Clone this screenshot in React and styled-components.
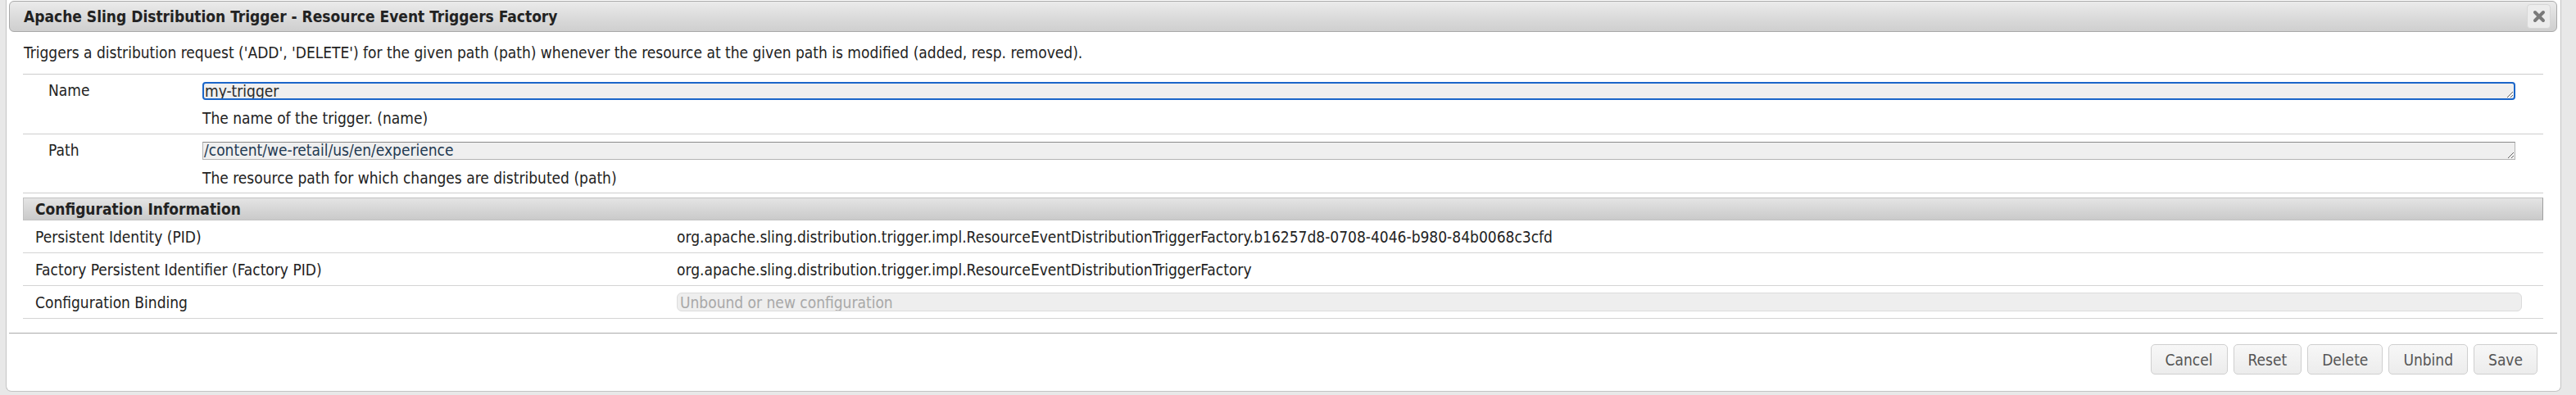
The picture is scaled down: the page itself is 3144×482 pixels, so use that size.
import React from 'react';
import styled, { createGlobalStyle } from 'styled-components';

const GlobalStyle = createGlobalStyle`
  body {
    margin: 0;
    background: #e8e8e8;
    font-family: "DejaVu Sans Condensed", "DejaVu Sans", Verdana, sans-serif;
    font-size: 19px;
    color: #222;
  }
`;

const Page = styled.div`
  padding: 0 18px 0 7px;
`;

const Dialog = styled.div`
  background: #fff;
  border: 1px solid #c4c4c4;
  border-top: none;
  border-radius: 0 0 7px 7px;
  padding: 1px 4px 0 3px;
`;

const TitleBar = styled.div`
  height: 36px;
  display: flex;
  align-items: center;
  justify-content: space-between;
  border: 1px solid #a9a9a9;
  border-radius: 6px;
  background: linear-gradient(180deg, #ebebeb 0%, #d9d9d9 60%, #cfcfcf 100%);
  padding: 0 7px 0 17px;
`;

const Title = styled.span`
  font-weight: bold;
  color: #222;
  line-height: 22px;
`;

const CloseButton = styled.button`
  width: 29px;
  height: 30px;
  border: 1px solid #d6d6d6;
  border-radius: 4px;
  background: #ececec;
  display: flex;
  align-items: center;
  justify-content: center;
  padding: 0;
  cursor: pointer;
`;

const Content = styled.div`
  padding: 0 17px;
`;

const Description = styled.p`
  margin: 0;
  padding: 14px 1px 15px;
  line-height: 22px;
  border-bottom: 1px solid #cdcdcd;
`;

const FieldRow = styled.div`
  display: grid;
  grid-template-columns: 219px 1fr;
  padding: 9px 34px ${p => p.$bottom}px 0;
  border-bottom: 1px solid #cdcdcd;
`;

const FieldLabel = styled.div`
  padding-left: 31px;
  line-height: 20px;
`;

const FieldBody = styled.div`
  display: flex;
  flex-direction: column;
`;

const TextArea = styled.textarea`
  display: block;
  box-sizing: border-box;
  width: 100%;
  height: 22px;
  margin: 0;
  padding: 0 1px;
  font: inherit;
  line-height: 19px;
  color: ${p => (p.$focused ? '#2a2a2a' : '#1f3a52')};
  background: #efefef;
  resize: vertical;
  overflow: hidden;
  outline: none;
  border: ${p => (p.$focused ? '2px solid #1b66c9' : '1px solid #b3b3b3')};
  border-top-color: ${p => (p.$focused ? '#1b66c9' : '#8a8a8a')};
  border-radius: ${p => (p.$focused ? '4px' : '0')};
`;

const Help = styled.div`
  margin-top: 11px;
  line-height: 22px;
`;

const SectionHeader = styled.div`
  margin-top: 5px;
  height: 26px;
  display: flex;
  align-items: center;
  padding-left: 14px;
  font-weight: bold;
  border: 1px solid #c2c2c2;
  border-right-color: #9f9f9f;
  background: linear-gradient(180deg, #e4e4e4 0%, #d4d4d4 60%, #cacaca 100%);
`;

const InfoRow = styled.div`
  display: grid;
  grid-template-columns: 798px 1fr;
  align-items: center;
  height: 39px;
  border-bottom: 1px solid #d4d4d4;
`;

const InfoLabel = styled.div`
  padding-left: 15px;
`;

const InfoValue = styled.div`
  padding-right: 26px;
`;

const BindingInput = styled.input`
  display: block;
  box-sizing: border-box;
  width: 100%;
  height: 23px;
  margin: 0;
  padding: 0 3px;
  font: inherit;
  background: #eeeeee;
  border: 1px solid #dcdcdc;
  border-radius: 6px;
  &::placeholder {
    color: #a8a8a8;
  }
`;

const Footer = styled.div`
  margin-top: 17px;
  border-top: 1px solid #ababab;
  display: flex;
  justify-content: flex-end;
  gap: 7px;
  padding: 13px 24px 20px 0;
`;

const Button = styled.button`
  height: 37px;
  padding: 0 17px;
  font: inherit;
  color: #555;
  border: 1px solid #cfcfcf;
  border-radius: 5px;
  background: linear-gradient(180deg, #f7f7f7 0%, #ececec 100%);
  cursor: pointer;
`;

const CloseIcon = () => (
  <svg width="16" height="16" viewBox="0 0 16 16">
    <path d="M3 3 L13 13 M13 3 L3 13" stroke="#7a7a7a" strokeWidth="4" strokeLinecap="round" />
  </svg>
);

const fields = [
  { label: 'Name', value: 'my-trigger', help: 'The name of the trigger. (name)', focused: true, bottom: 8 },
  { label: 'Path', value: '/content/we-retail/us/en/experience', help: 'The resource path for which changes are distributed (path)', bottom: 7 },
];

const info = [
  { label: 'Persistent Identity (PID)', value: 'org.apache.sling.distribution.trigger.impl.ResourceEventDistributionTriggerFactory.b16257d8-0708-4046-b980-84b0068c3cfd' },
  { label: 'Factory Persistent Identifier (Factory PID)', value: 'org.apache.sling.distribution.trigger.impl.ResourceEventDistributionTriggerFactory' },
];

const App = () => (
  <>
    <GlobalStyle />
    <Page>
      <Dialog>
        <TitleBar>
          <Title>Apache Sling Distribution Trigger - Resource Event Triggers Factory</Title>
          <CloseButton aria-label="close">
            <CloseIcon />
          </CloseButton>
        </TitleBar>

        <Content>
          <Description>
            Triggers a distribution request ('ADD', 'DELETE') for the given path (path) whenever the resource at the given path is modified (added, resp. removed).
          </Description>

          {fields.map((f) => (
            <FieldRow key={f.label} $bottom={f.bottom}>
              <FieldLabel>{f.label}</FieldLabel>
              <FieldBody>
                <TextArea rows={1} defaultValue={f.value} $focused={f.focused} />
                <Help>{f.help}</Help>
              </FieldBody>
            </FieldRow>
          ))}

          <SectionHeader>Configuration Information</SectionHeader>
          {info.map((r) => (
            <InfoRow key={r.label}>
              <InfoLabel>{r.label}</InfoLabel>
              <InfoValue>{r.value}</InfoValue>
            </InfoRow>
          ))}
          <InfoRow>
            <InfoLabel>Configuration Binding</InfoLabel>
            <InfoValue>
              <BindingInput disabled placeholder="Unbound or new configuration" />
            </InfoValue>
          </InfoRow>
        </Content>

        <Footer>
          <Button>Cancel</Button>
          <Button>Reset</Button>
          <Button>Delete</Button>
          <Button>Unbind</Button>
          <Button>Save</Button>
        </Footer>
      </Dialog>
    </Page>
  </>
);

export default App;
